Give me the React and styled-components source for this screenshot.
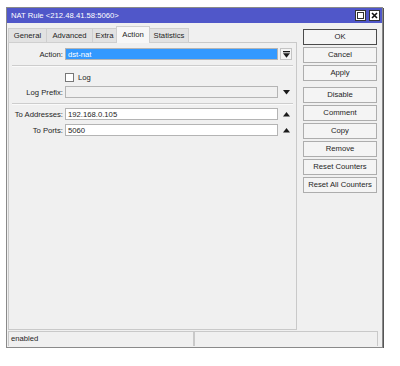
import React from 'react'
import styled, { createGlobalStyle } from 'styled-components'

const Global = createGlobalStyle`
  html, body { margin: 0; padding: 0; background: #fff; }
  body { font-family: "Liberation Sans", Arial, sans-serif; font-size: 7.7px; color: #1e1e1e; }
`

const Page = styled.div`
  padding: 7px 0 0 6px;
`

const Window = styled.div`
  width: 375px;
  height: 339px;
  border: 1px solid #8a8a8a;
  box-shadow: 1px 1px 0 #555;
  background: #f0f0f0;
  display: flex;
  flex-direction: column;
`

const TitleBar = styled.div`
  height: 16px;
  background: #5057c9;
  color: #fff;
  display: flex;
  align-items: center;
  justify-content: space-between;
  padding: 0 2px 0 4px;
`

const TitleButtons = styled.div`
  display: flex;
  gap: 3px;
`

const TitleButton = styled.div`
  width: 9px;
  height: 9px;
  background: #fff;
  border: 1px solid #333;
  display: flex;
  align-items: center;
  justify-content: center;
`

const Body = styled.div`
  flex: 1;
  display: flex;
  gap: 6px;
  padding: 4px 5px 0 1px;
`

const LeftCol = styled.div`
  width: 289px;
  display: flex;
  flex-direction: column;
`

const Tabs = styled.div`
  display: flex;
  align-items: flex-end;
  height: 16px;
`

const Tab = styled.div`
  width: ${({ $w }) => $w}px;
  height: ${({ $active }) => ($active ? '17px' : '15px')};
  box-sizing: border-box;
  display: flex;
  align-items: center;
  justify-content: center;
  background: ${({ $active }) => ($active ? '#f7f7f7' : '#e2e2e2')};
  border: 1px solid #cfcfcf;
  border-bottom: ${({ $active }) => ($active ? 'none' : '1px solid #cfcfcf')};
  margin-right: -1px;
  position: relative;
  z-index: ${({ $active }) => ($active ? 1 : 0)};
`

const Panel = styled.div`
  height: 288px;
  margin-top: -1px;
  border: 1px solid #c9c9c9;
  box-sizing: border-box;
  background: #f0f0f0;
  padding-top: 5px;
`

const Row = styled.div`
  display: grid;
  grid-template-columns: 54px 213px 14px;
  column-gap: 2px;
  align-items: center;
  height: 13px;
  margin-top: ${({ $mt }) => $mt || 0}px;
`

const Label = styled.div`
  text-align: right;
  white-space: nowrap;
`

const Field = styled.div`
  height: 12px;
  box-sizing: border-box;
  border: 1px solid #b4b4b4;
  background: ${({ $variant }) =>
    $variant === 'selected' ? '#3399ff' : $variant === 'disabled' ? '#f0f0f0' : '#fff'};
  color: ${({ $variant }) => ($variant === 'selected' ? '#fff' : '#1e1e1e')};
  padding-left: 2px;
  display: flex;
  align-items: center;
  white-space: nowrap;
`

const DropButton = styled.div`
  width: 12px;
  height: 12px;
  box-sizing: border-box;
  border: 1px solid #c4c4c4;
  background: #f4f4f4;
  display: flex;
  align-items: center;
  justify-content: center;
`

const IconCell = styled.div`
  display: flex;
  align-items: center;
  justify-content: center;
  width: 12px;
`

const Separator = styled.div`
  height: 1px;
  margin: ${({ $m }) => $m};
  background: #cdcdcd;
  border-bottom: 1px solid #fafafa;
`

const CheckRow = styled.div`
  display: flex;
  align-items: center;
  gap: 4px;
  padding-left: 56px;
  height: 10px;
  margin-top: 6px;
`

const CheckBox = styled.div`
  width: 9px;
  height: 9px;
  box-sizing: border-box;
  border: 1px solid #777;
  background: #fff;
`

const ButtonCol = styled.div`
  width: 74px;
  display: flex;
  flex-direction: column;
  padding-top: 2px;
`

const Button = styled.div`
  height: 16px;
  box-sizing: border-box;
  border: 1px solid ${({ $default }) => ($default ? '#4a4a4a' : '#adadad')};
  background: #f4f4f4;
  display: flex;
  align-items: center;
  justify-content: center;
  margin-top: ${({ $mt }) => $mt}px;
  white-space: nowrap;
`

const StatusBar = styled.div`
  display: flex;
  height: 15px;
  margin: 1px 4px 1px 1px;
  border-top: 1px solid #c9c9c9;
`

const StatusCell = styled.div`
  width: ${({ $w }) => $w}px;
  box-sizing: border-box;
  border-left: 1px solid #c9c9c9;
  border-right: 1px solid #c9c9c9;
  padding-left: 2px;
  display: flex;
  align-items: center;
  background: #f0f0f0;
`

const Down = () => (
  <svg width="7" height="5" viewBox="0 0 7 5"><path d="M0 0H7L3.5 4.5Z" fill="#1a1a1a" /></svg>
)

const Up = () => (
  <svg width="7" height="5" viewBox="0 0 7 5"><path d="M0 4.5H7L3.5 0Z" fill="#1a1a1a" /></svg>
)

const DownBar = () => (
  <svg width="7" height="7" viewBox="0 0 7 7">
    <rect x="0" y="0" width="7" height="1.3" fill="#1a1a1a" />
    <path d="M0 2.3H7L3.5 6.8Z" fill="#1a1a1a" />
  </svg>
)

const tabs = [
  ['General', 39],
  ['Advanced', 47],
  ['Extra', 25],
  ['Action', 34, true],
  ['Statistics', 40],
]

const buttons = [
  ['OK', 0, true],
  ['Cancel', 2],
  ['Apply', 2],
  ['Disable', 6],
  ['Comment', 2],
  ['Copy', 2],
  ['Remove', 2],
  ['Reset Counters', 2],
  ['Reset All Counters', 2],
]

export default function App() {
  return (
    <>
      <Global />
      <Page>
        <Window>
          <TitleBar>
            <span>NAT Rule &lt;212.48.41.58:5060&gt;</span>
            <TitleButtons>
              <TitleButton>
                <svg width="7" height="7" viewBox="0 0 7 7">
                  <rect x="0.5" y="0.5" width="6" height="6" fill="none" stroke="#333" />
                </svg>
              </TitleButton>
              <TitleButton>
                <svg width="7" height="7" viewBox="0 0 7 7">
                  <path d="M1 1L6 6M6 1L1 6" stroke="#111" strokeWidth="1.6" />
                </svg>
              </TitleButton>
            </TitleButtons>
          </TitleBar>
          <Body>
            <LeftCol>
              <Tabs>
                {tabs.map(([t, w, a]) => (
                  <Tab key={t} $w={w} $active={a}>{t}</Tab>
                ))}
              </Tabs>
              <Panel>
                <Row>
                  <Label>Action:</Label>
                  <Field $variant="selected">dst-nat</Field>
                  <DropButton><DownBar /></DropButton>
                </Row>
                <Separator $m="4px 3px 0 3px" />
                <CheckRow>
                  <CheckBox />
                  <span>Log</span>
                </CheckRow>
                <Row $mt={3}>
                  <Label>Log Prefix:</Label>
                  <Field $variant="disabled" />
                  <IconCell><Down /></IconCell>
                </Row>
                <Separator $m="4px 3px 0 3px" />
                <Row $mt={3}>
                  <Label>To Addresses:</Label>
                  <Field>192.168.0.105</Field>
                  <IconCell><Up /></IconCell>
                </Row>
                <Row $mt={3}>
                  <Label>To Ports:</Label>
                  <Field>5060</Field>
                  <IconCell><Up /></IconCell>
                </Row>
              </Panel>
            </LeftCol>
            <ButtonCol>
              {buttons.map(([t, mt, d]) => (
                <Button key={t} $mt={mt} $default={d}>{t}</Button>
              ))}
            </ButtonCol>
          </Body>
          <StatusBar>
            <StatusCell $w={186}>enabled</StatusCell>
            <StatusCell $w={184} />
          </StatusBar>
        </Window>
      </Page>
    </>
  )
}
